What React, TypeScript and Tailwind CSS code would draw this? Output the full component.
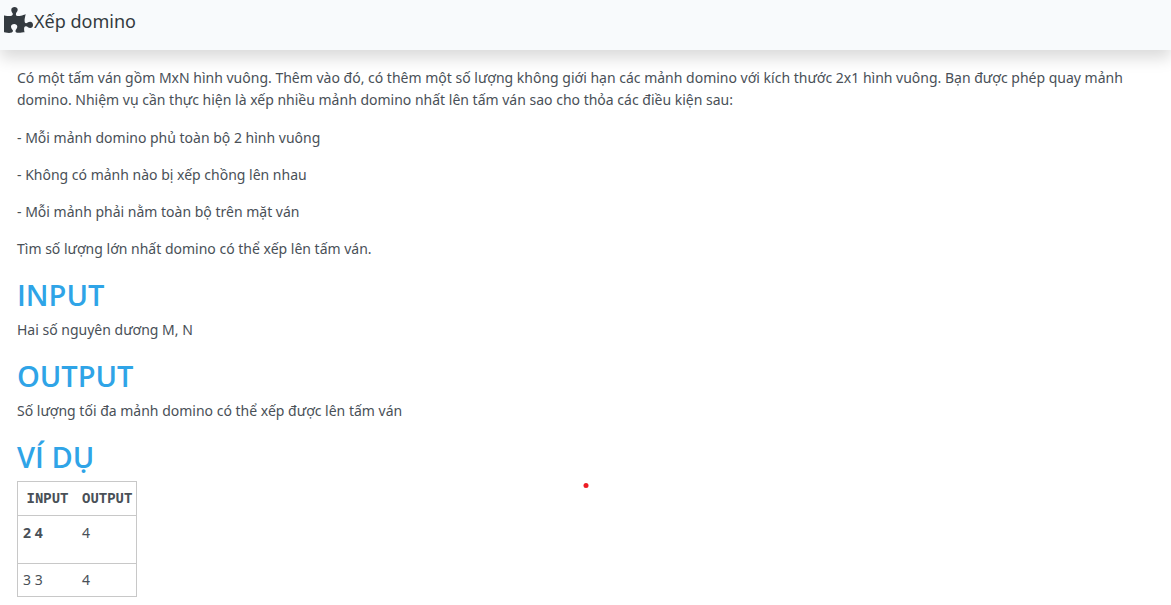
import { FaPuzzlePiece } from "react-icons/fa";

const rules = [
  "- Mỗi mảnh domino phủ toàn bộ 2 hình vuông",
  "- Không có mảnh nào bị xếp chồng lên nhau",
  "- Mỗi mảnh phải nằm toàn bộ trên mặt ván",
  "Tìm số lượng lớn nhất domino có thể xếp lên tấm ván.",
];

function Section({ title, text }: { title: string; text: string }) {
  return (
    <section>
      <Heading>{title}</Heading>
      <p className="mb-[15px]">{text}</p>
    </section>
  );
}

function Heading({ children }: { children: string }) {
  return (
    <h2 className="mb-1 font-['Open_Sans',sans-serif] text-[29px] leading-10 font-semibold text-[#2fa4e7]">
      {children}
    </h2>
  );
}

export default function App() {
  return (
    <div className="bg-white pb-2 font-['Noto_Sans','Open_Sans',sans-serif] text-[14px] leading-[22px] text-[#495057]">
      <header className="flex h-[50px] items-start bg-[#f8fafc] px-1 pt-[6px] text-[#343a40] shadow-[0_8px_16px_rgba(0,0,0,0.15)]">
        <FaPuzzlePiece className="h-7 w-[29px] shrink-0" aria-hidden="true" />
        <h1 className="pl-px text-[18px] leading-[30px]">Xếp domino</h1>
      </header>
      <main className="px-[17px] pt-[17px]">
        <p className="mb-4">
          Có một tấm ván gồm MxN hình vuông. Thêm vào đó, có thêm một số lượng không giới hạn các mảnh domino với kích thước 2x1 hình vuông. Bạn được phép quay mảnh domino. Nhiệm vụ cần thực hiện là xếp nhiều mảnh domino nhất lên tấm ván sao cho thỏa các điều kiện sau:
        </p>
        {rules.map((rule) => (
          <p key={rule} className="mb-[15px]">{rule}</p>
        ))}
        <Section title="INPUT" text="Hai số nguyên dương M, N" />
        <Section title="OUTPUT" text="Số lượng tối đa mảnh domino có thể xếp được lên tấm ván" />
        <section className="relative">
          <Heading>VÍ DỤ</Heading>
          <table className="w-[120px] table-fixed border-collapse border border-[#c8c8c8]">
            <thead>
              <tr className="h-[34px] border-b border-[#c8c8c8] font-['Liberation_Mono',monospace]">
                <th className="p-[5px] font-bold">INPUT</th>
                <th className="p-[5px] font-bold">OUTPUT</th>
              </tr>
            </thead>
            <tbody>
              <tr className="h-12 border-b border-[#c8c8c8] align-top">
                <td className="px-[5px] py-[6px] font-bold">2 4</td>
                <td className="px-[5px] py-[6px]">4</td>
              </tr>
              <tr className="h-[33px] align-top">
                <td className="p-[5px]">3 3</td>
                <td className="p-[5px]">4</td>
              </tr>
            </tbody>
          </table>
          <span className="absolute top-[46px] left-1/2 size-[5px] -translate-x-1/2 rounded-full bg-[#ed1c24]" />
        </section>
      </main>
    </div>
  );
}
